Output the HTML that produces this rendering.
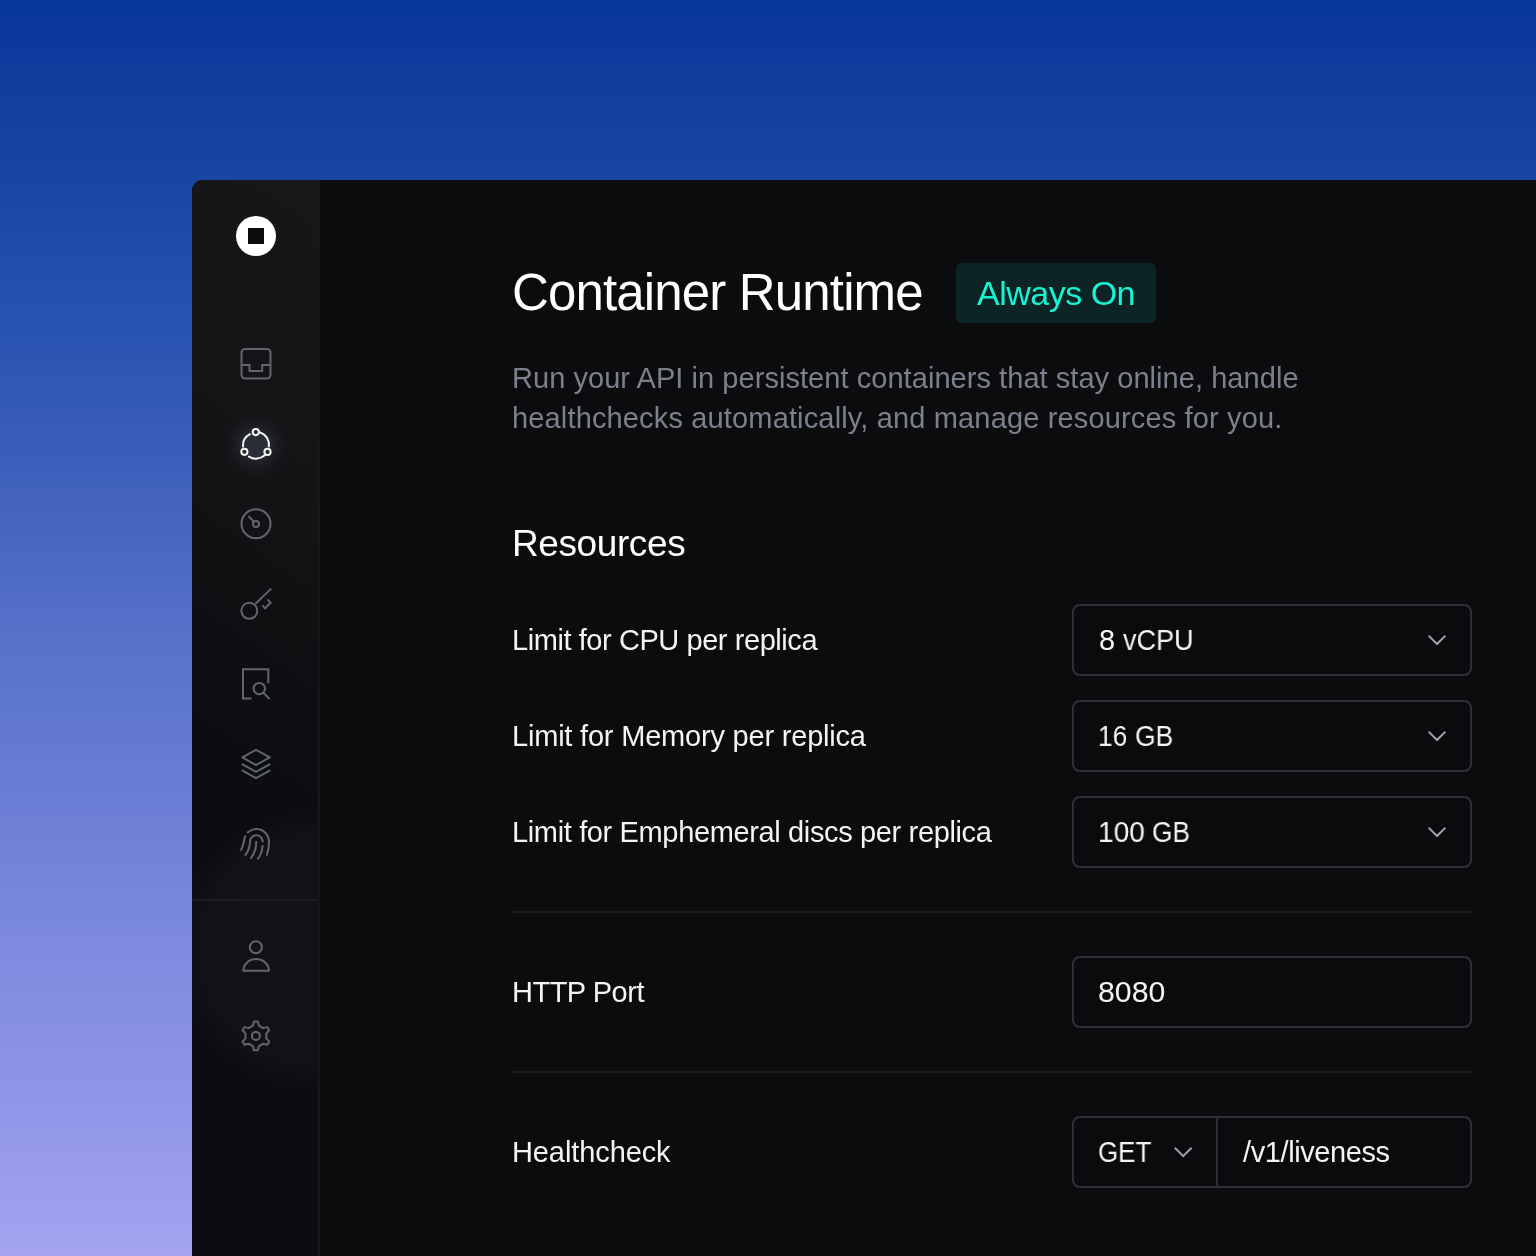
<!DOCTYPE html>
<html>
<head>
<meta charset="utf-8">
<style>
*{margin:0;padding:0;box-sizing:border-box}
html,body{width:1536px;height:1256px;overflow:hidden;-webkit-font-smoothing:antialiased}
body{background:linear-gradient(180deg,#08379a 0%,#1a44a2 13.5%,#2652b0 24.7%,#3c5eba 36.6%,#5570c8 49.4%,#687cd3 62%,#7e8bde 75.6%,#9196e8 88.4%,#a4a4f0 100%);font-family:"Liberation Sans",sans-serif;position:relative}
.card{position:absolute;left:192px;top:180px;width:1400px;height:1100px;border-top-left-radius:11px;overflow:hidden;background:#0b0c0e}
.side{position:absolute;left:0;top:0;width:128px;height:1100px;background:radial-gradient(circle at 121px 770px,#131317 0,#121216 115px,rgba(18,18,22,0) 138px),linear-gradient(215deg,#171719 0%,#151518 18%,#141417 26%,#131316 32%,#101013 39%,#0e0f12 46%,#0c0d10 52%,#0c0d10 100%);border-right:2px solid #17171b}
.sdiv{position:absolute;left:0;top:719px;width:126px;height:2px;background:#1c1c20}
.t{position:absolute;white-space:nowrap;line-height:1;will-change:transform}
.v{font-size:29px;color:#f4f4f5;transform-origin:0 0}
.box{position:absolute;left:880px;width:400px;height:72px;border:2px solid #2e2f35;border-radius:8px;background:#0a0b0d}
.hr{position:absolute;left:320px;width:960px;height:2px;background:#1d1e22}
</style>
</head>
<body>
<div class="card">
  <div class="side">
    <!-- logo -->
    <div style="position:absolute;left:44px;top:36px;width:40px;height:40px;border-radius:50%;background:#fff"></div>
    <div style="position:absolute;left:56px;top:48px;width:16px;height:16px;background:#0b0c0f"></div>
    <div class="sdiv"></div>
  </div>
  <!-- main content: coordinates relative to card (subtract 192,180) -->
  <div class="t" id="title" style="left:320px;top:87px;font-size:51px;color:#fff;letter-spacing:-0.85px">Container Runtime</div>
  <div style="position:absolute;left:764px;top:83px;width:200px;height:60px;border-radius:6px;background:#0c2426"></div>
  <div class="t" id="badge" style="left:785px;top:96px;font-size:34px;color:#17f2d0;letter-spacing:-0.5px">Always On</div>
  <div class="t" id="d1" style="left:320px;top:184px;font-size:29px;color:#7d808c;letter-spacing:0.05px">Run your API in persistent containers that stay online, handle</div>
  <div class="t" id="d2" style="left:320px;top:224px;font-size:29px;color:#7d808c;letter-spacing:0.15px">healthchecks automatically, and manage resources for you.</div>
  <div class="t" id="res" style="left:320px;top:345px;font-size:37px;color:#fff;letter-spacing:-0.4px">Resources</div>

  <div class="t" style="left:320px;top:446px;font-size:29px;color:#f4f4f5;letter-spacing:-0.43px">Limit for CPU per replica</div>
  <div class="t" style="left:320px;top:542px;font-size:29px;color:#f4f4f5;letter-spacing:-0.2px">Limit for Memory per replica</div>
  <div class="t" style="left:320px;top:638px;font-size:29px;color:#f4f4f5;letter-spacing:-0.36px">Limit for Emphemeral discs per replica</div>
  <div class="t" style="left:320px;top:798px;font-size:29px;color:#f4f4f5;letter-spacing:-0.5px">HTTP Port</div>
  <div class="t" style="left:320px;top:958px;font-size:29px;color:#f4f4f5;letter-spacing:-0.1px">Healthcheck</div>

  <div class="box" style="top:424px"></div>
  <div class="box" style="top:520px"></div>
  <div class="box" style="top:616px"></div>
  <div class="hr" style="top:731px"></div>
  <div class="box" style="top:776px"></div>
  <div class="hr" style="top:891px"></div>
  <div class="box" style="top:936px"></div>
  <div style="position:absolute;left:1024px;top:936px;width:2px;height:72px;background:#2e2f35"></div>
<div class="t v" style="left:906.8px;top:446px;transform:scaleX(1)">8</div>
<div class="t v" style="left:931.2px;top:446px;transform:scaleX(0.932)">vCPU</div>
<div class="t v" style="left:905.8px;top:542px;transform:scaleX(0.903)">16</div>
<div class="t v" style="left:943.1px;top:542px;transform:scaleX(0.913)">GB</div>
<div class="t v" style="left:905.7px;top:638px;transform:scaleX(0.967)">100</div>
<div class="t v" style="left:959.8px;top:638px;transform:scaleX(0.908)">GB</div>
<div class="t v" style="left:905.6px;top:798px;transform:scaleX(1.044)">8080</div>
<div class="t v" style="left:906.1px;top:958px;transform:scaleX(0.893)">GET</div>
  <div class="t" style="left:1051px;top:958px;font-size:29px;color:#f4f4f5;letter-spacing:-0.4px">/v1/liveness</div>
</div>

<div style="position:absolute;left:212px;top:401px;width:88px;height:88px;border-radius:50%;background:radial-gradient(circle at 50% 50%,#2b2e38 0,#2a2d36 12px,#24262d 15px,#1d1e23 19px,#18181c 25px,rgba(22,22,26,0) 34px)"></div>
<svg style="position:absolute;left:0;top:0" width="1536" height="1256" viewBox="0 0 1536 1256" fill="none" stroke-linecap="round" stroke-linejoin="round">
 <g stroke="#62656f" stroke-width="2">
  <!-- inbox -->
  <rect x="241.5" y="349" width="29" height="29.5" rx="3.5"/>
  <path d="M241.5 365 H249.5 V371 H262.2 V365 H270.5" stroke-linejoin="miter" stroke-linecap="butt"/>
  <!-- dashboard -->
  <circle cx="256" cy="523.7" r="14.5"/>
  <circle cx="256" cy="524" r="3"/>
  <path d="M249 516.7 L253.8 521.6"/>
  <!-- key -->
  <circle cx="249.3" cy="610.8" r="8"/>
  <path d="M255.2 604 L271.2 588.6" stroke-linecap="butt"/>
  <path d="M267.3 599.4 L270.6 602.8 L265.1 608.3 L262.4 605.3" stroke-linecap="butt" stroke-linejoin="miter"/>
  <!-- doc search -->
  <path d="M251.5 698.5 H243 V669.25 H268.3 V683.3" stroke-linecap="butt" stroke-linejoin="miter"/>
  <circle cx="259.3" cy="688.6" r="5.7"/>
  <path d="M263.4 692.7 L269 698.4"/>
  <!-- layers -->
  <path d="M256 749.8 L269.8 757.4 L256 765.1 L242.4 757.4 Z"/>
  <path d="M242.6 764.3 L256 771.8 L269.6 764.3"/>
  <path d="M242.6 770.6 L256 778.1 L269.6 770.6"/>
  <!-- fingerprint -->
  <g transform="translate(236 824)">
   <path d="M11.8 8.4 C15 5.8 18 4.9 21 5.1 C28.2 5.6 33 11.2 33 18.5 C33 23 32.2 27 30.9 30.9"/>
   <path d="M9.1 12.3 C8 16 7.6 21.5 5.1 25.8"/>
   <path d="M9.4 30.9 C12.6 26.8 14 22.5 14 17.8 C14 14 17 11.2 20.4 11.2 C23.6 11.2 26.1 13.8 26.8 17.5"/>
   <path d="M20.2 17.7 C20.2 24 18.6 29.5 15 33.9"/>
   <path d="M26.6 22 C26.1 27 24.6 31.2 22 34.7"/>
  </g>
  <!-- user -->
  <circle cx="255.9" cy="947.2" r="6"/>
  <path d="M243.3 970.7 A12.8 11.7 0 0 1 268.9 970.7 Z"/>
  <!-- gear -->
  <path d="M252.80 1025.70 L254.00 1021.60 L257.80 1021.60 L259.00 1025.70 L263.18 1028.12 L267.33 1027.10 L269.23 1030.40 L266.28 1033.48 L266.28 1038.32 L269.23 1041.40 L267.33 1044.70 L263.18 1043.68 L259.00 1046.10 L257.80 1050.20 L254.00 1050.20 L252.80 1046.10 L248.62 1043.68 L244.47 1044.70 L242.57 1041.40 L245.52 1038.32 L245.52 1033.48 L242.57 1030.40 L244.47 1027.10 L248.62 1028.12 Z"/>
  <circle cx="255.9" cy="1035.9" r="4"/>
 </g>
 <!-- network (active) -->
 <g stroke="#f4f4f5" stroke-width="2">
  <path d="M259.9 432.4 A13 13 0 0 1 268.9 446.4"/>
  <path d="M264.7 455.3 A13 13 0 0 1 249 456.6"/>
  <path d="M243 446.6 A13 13 0 0 1 250 434.2"/>
  <circle cx="255.8" cy="432.1" r="3.1"/>
  <circle cx="244.4" cy="451.8" r="3.1"/>
  <circle cx="267.5" cy="451.9" r="3.1"/>
 </g>
 <!-- select chevrons -->
 <g stroke="#a1a2a9" stroke-width="2" stroke-linecap="butt" stroke-linejoin="miter">
  <path d="M1428.6 635.6 L1437 644 L1445.4 635.6"/>
  <path d="M1428.6 731.6 L1437 740 L1445.4 731.6"/>
  <path d="M1428.6 827.6 L1437 836 L1445.4 827.6"/>
  <path d="M1174.8 1147.8 L1183.2 1156.2 L1191.6 1147.8"/>
 </g>
</svg>
</body>
</html>
